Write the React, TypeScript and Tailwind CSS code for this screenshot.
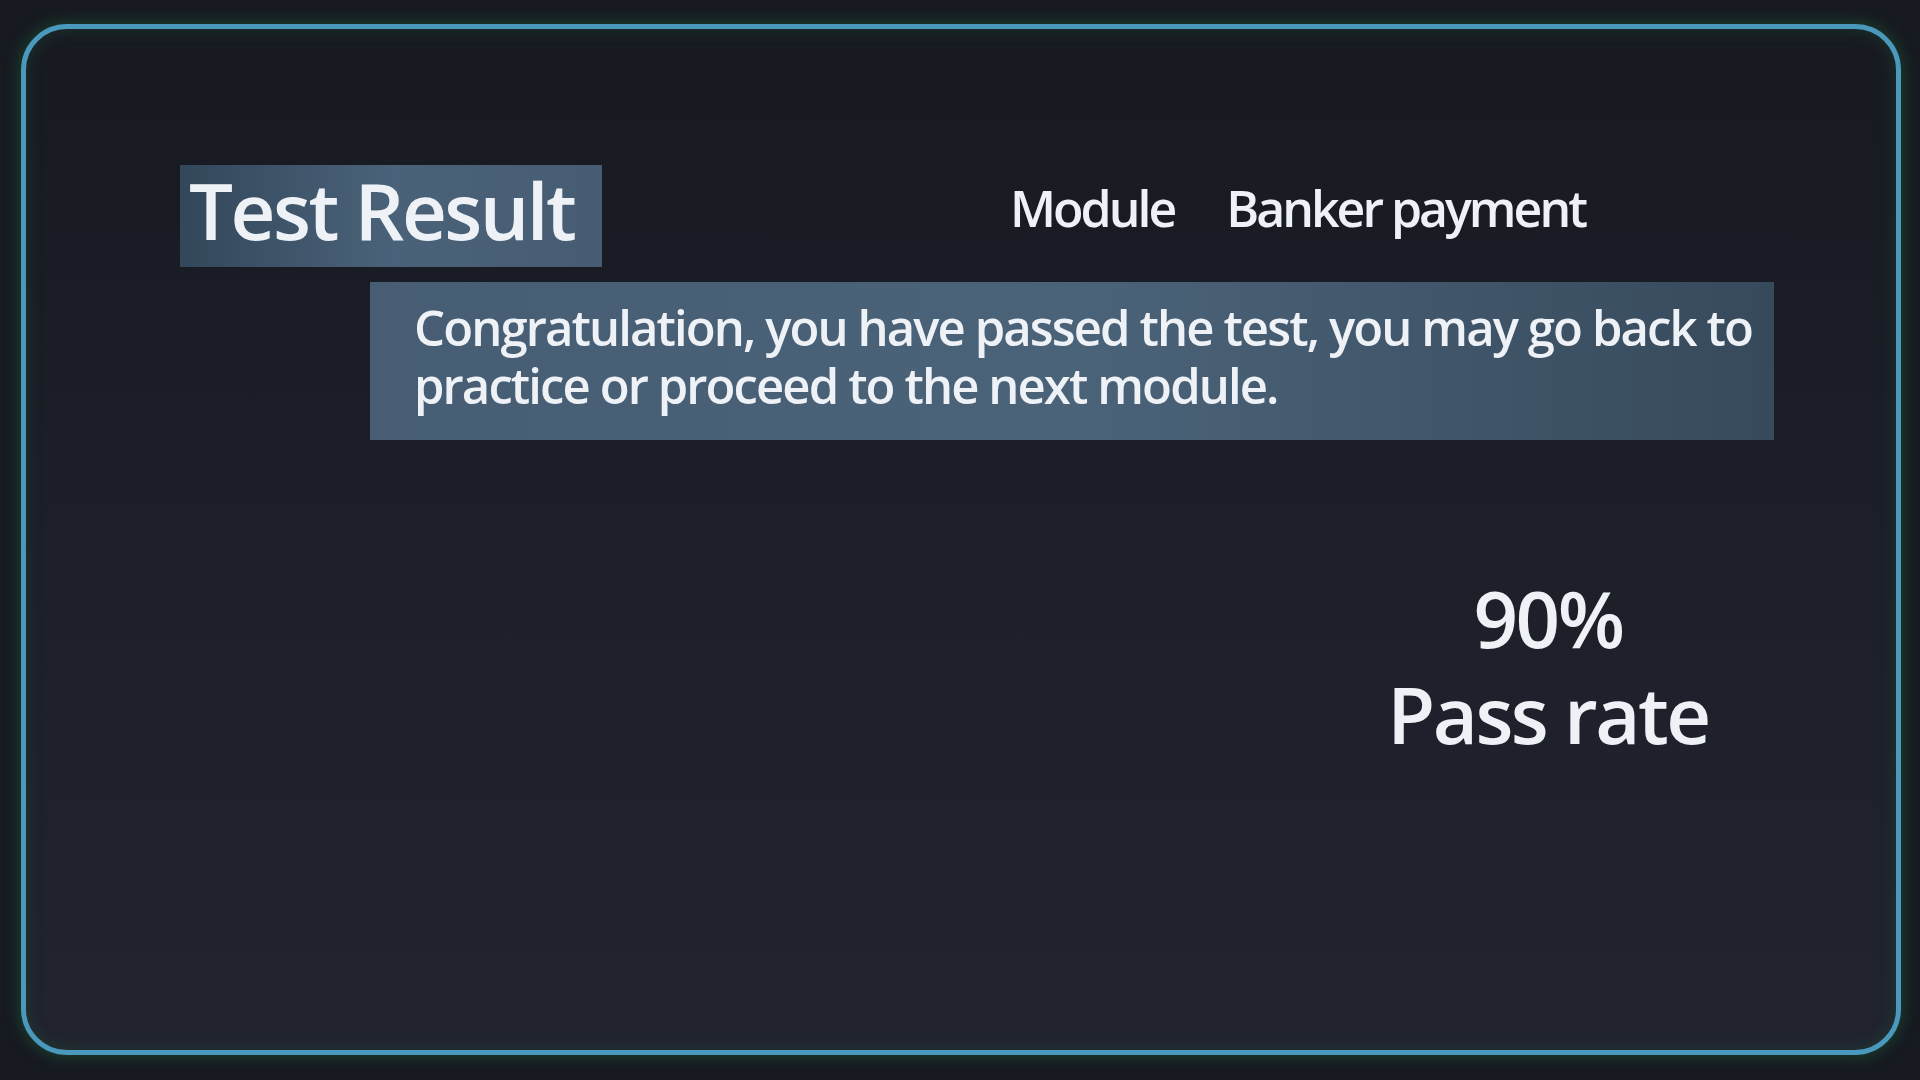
export default function App() {
  return (
    <div
      className="min-h-screen w-full bg-[#171a21] pt-[24px] pl-[21px] pr-[19px] pb-[25px]"
      style={{ fontFamily: '"Open Sans", "Noto Sans", sans-serif' }}
    >
      <div className="h-[1031px] w-[1880px] rounded-[46px] border-[5px] border-[#4a98bb] bg-gradient-to-b from-[#181a22] to-[#21232f] shadow-[0_0_14px_3px_rgba(28,88,52,0.55),inset_0_0_14px_2px_rgba(28,88,52,0.35)] pl-[154px] pt-[136px] font-semibold text-[#eef2f7]">
        <div className="flex items-center">
          <div className="flex h-[102px] w-[422px] items-center bg-gradient-to-r from-[#33475a] via-[#4a6279] to-[#465c72] pl-[9px]">
            <span className="text-[78px] leading-none tracking-[-2.5px] pb-[12px]">Test Result</span>
          </div>
          <span className="ml-[408px] text-[50px] leading-none tracking-[-3px] pb-[16px]">Module</span>
          <span className="ml-[52px] text-[50px] leading-none tracking-[-3px] pb-[16px]">Banker payment</span>
        </div>

        <div className="ml-[190px] mt-[15px] h-[158px] w-[1404px] bg-gradient-to-r from-[#465d73] via-[#4b6379] to-[#374a5c] pl-[44px] pt-[16px]">
          <p className="text-[49px] leading-[58px] tracking-[-1.9px]">
            Congratulation, you have passed the test, you may go back to
            <br />
            practice or proceed to the next module.
          </p>
        </div>

        <div className="ml-[1198px] mt-[130px] flex w-[340px] flex-col items-center">
          <span className="text-[78px] leading-[96px] tracking-[-2.5px]">90%</span>
          <span className="text-[78px] leading-[96px] tracking-[-2.5px]">Pass rate</span>
        </div>
      </div>
    </div>
  );
}
